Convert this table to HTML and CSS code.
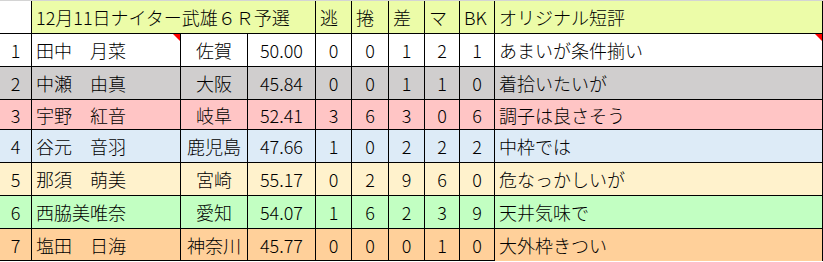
FILE: index.html
```html
<!DOCTYPE html>
<html lang="ja">
<head>
<meta charset="utf-8">
<title>12月11日ナイター武雄６Ｒ予選</title>
<link rel="stylesheet" href="styles.css">
</head>
<body>
<div class="sheet">
  <div class="c idx hdr-idx"></div>
  <div class="c head title">12月11日ナイター武雄６Ｒ予選</div>
  <div class="c head">逃</div>
  <div class="c head">捲</div>
  <div class="c head">差</div>
  <div class="c head">マ</div>
  <div class="c head">BK</div>
  <div class="c head">オリジナル短評</div>

  <div class="c idx r1">1</div>
  <div class="c name r1 mark">田中　月菜</div>
  <div class="c ctr r1">佐賀</div>
  <div class="c ctr r1">50.00</div>
  <div class="c ctr r1">0</div>
  <div class="c ctr r1">0</div>
  <div class="c ctr r1">1</div>
  <div class="c ctr r1">2</div>
  <div class="c ctr r1">1</div>
  <div class="c note r1 mark">あまいが条件揃い</div>

  <div class="c idx r2">2</div>
  <div class="c name r2">中瀬　由真</div>
  <div class="c ctr r2">大阪</div>
  <div class="c ctr r2">45.84</div>
  <div class="c ctr r2">0</div>
  <div class="c ctr r2">0</div>
  <div class="c ctr r2">1</div>
  <div class="c ctr r2">1</div>
  <div class="c ctr r2">0</div>
  <div class="c note r2">着拾いたいが</div>

  <div class="c idx r3">3</div>
  <div class="c name r3">宇野　紅音</div>
  <div class="c ctr r3">岐阜</div>
  <div class="c ctr r3">52.41</div>
  <div class="c ctr r3">3</div>
  <div class="c ctr r3">6</div>
  <div class="c ctr r3">3</div>
  <div class="c ctr r3">0</div>
  <div class="c ctr r3">6</div>
  <div class="c note r3">調子は良さそう</div>

  <div class="c idx r4">4</div>
  <div class="c name r4">谷元　音羽</div>
  <div class="c ctr r4">鹿児島</div>
  <div class="c ctr r4">47.66</div>
  <div class="c ctr r4">1</div>
  <div class="c ctr r4">0</div>
  <div class="c ctr r4">2</div>
  <div class="c ctr r4">2</div>
  <div class="c ctr r4">2</div>
  <div class="c note r4">中枠では</div>

  <div class="c idx r5">5</div>
  <div class="c name r5">那須　萌美</div>
  <div class="c ctr r5">宮崎</div>
  <div class="c ctr r5">55.17</div>
  <div class="c ctr r5">0</div>
  <div class="c ctr r5">2</div>
  <div class="c ctr r5">9</div>
  <div class="c ctr r5">6</div>
  <div class="c ctr r5">0</div>
  <div class="c note r5">危なっかしいが</div>

  <div class="c idx r6">6</div>
  <div class="c name r6">西脇美唯奈</div>
  <div class="c ctr r6">愛知</div>
  <div class="c ctr r6">54.07</div>
  <div class="c ctr r6">1</div>
  <div class="c ctr r6">6</div>
  <div class="c ctr r6">2</div>
  <div class="c ctr r6">3</div>
  <div class="c ctr r6">9</div>
  <div class="c note r6">天井気味で</div>

  <div class="c idx r7 last">7</div>
  <div class="c name r7 last">塩田　日海</div>
  <div class="c ctr r7 last">神奈川</div>
  <div class="c ctr r7 last">45.77</div>
  <div class="c ctr r7 last">0</div>
  <div class="c ctr r7 last">0</div>
  <div class="c ctr r7 last">0</div>
  <div class="c ctr r7 last">1</div>
  <div class="c ctr r7 last">0</div>
  <div class="c note r7">大外枠きつい</div>
</div>
</body>
</html>
```
FILE: styles.css
```css
html, body {
  margin: 0;
  padding: 0;
  background: #ffffff;
}

.sheet {
  width: 822px;
  display: grid;
  grid-template-columns: 31px 148px 66px 67px 35px 36px 35px 34px 34px 327px;
  grid-template-rows: 32px 32px 32px 29px 32px 32px 32px 32px;
  gap: 1px;
  padding-right: 1px;
  background: #000000;
  border-top: 1px solid #d4d4d4;
  font-family: "Noto Sans CJK JP", "Noto Sans", sans-serif;
  font-size: 18px;
  font-weight: 300;
  color: #000000;
}

.c {
  display: flex;
  align-items: center;
  white-space: nowrap;
  overflow: hidden;
  position: relative;
  line-height: 1;
}

.idx { justify-content: center; }
.hdr-idx { background: #ffffff; }

.head {
  background: #ecfca8;
  padding-left: 4px;
}
.title { grid-column: span 3; }

.name, .note { padding-left: 4px; }
.ctr { justify-content: center; }

.r1 { background: #ffffff; }
.r2 { background: #d0cece; }
.r3 { background: #ffc5c5; }
.r4 { background: #ddebf7; }
.r5 { background: #fff2cc; }
.r6 { background: #c2ffc2; }
.r7 { background: #ffd09a; }

.last { box-shadow: inset 0 -1px 0 #000000; }

.mark::after {
  content: "";
  position: absolute;
  top: 0;
  right: 0;
  width: 0;
  height: 0;
  border-top: 7px solid #ff0000;
  border-left: 7px solid transparent;
}
```
